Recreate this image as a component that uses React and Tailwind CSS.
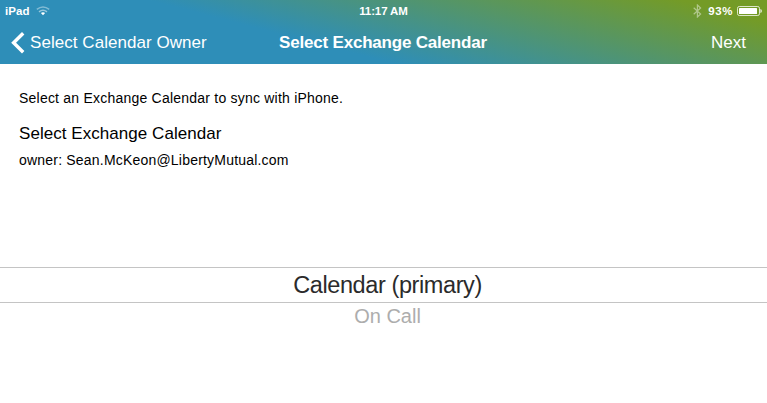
function Wifi() {
  return (
    <svg className="ml-[6px] h-[10px] w-[14px]" viewBox="0 0 14 10" fill="none">
      <path d="M.8 3.4Q7 -1.6 13.2 3.4" stroke="white" strokeOpacity=".4" strokeWidth="1.5" />
      <path d="M3 5.8Q7 2.6 11 5.8" stroke="white" strokeOpacity=".5" strokeWidth="1.5" />
      <path d="M4.9 7Q7 5.5 9.1 7L7 9.3Z" fill="white" />
    </svg>
  );
}

function Bluetooth() {
  return (
    <svg className="h-[14px] w-[9px]" viewBox="0 0 9 14" fill="none" stroke="white" strokeOpacity=".45" strokeWidth="1.2">
      <path d="M.7 3.8L7.6 10L4.4 13V1L7.6 4L.7 10.2" />
    </svg>
  );
}

function Battery() {
  return (
    <svg className="h-[11px] w-[26px]" viewBox="0 0 26 11" fill="none">
      <rect x=".5" y=".5" width="22" height="9" rx="1.8" stroke="white" strokeOpacity=".75" />
      <rect x="2" y="2" width="18" height="6" rx=".5" fill="white" />
      <path d="M23.8 3.3Q25.2 5 23.8 6.7Z" fill="white" stroke="white" strokeWidth=".5" />
    </svg>
  );
}

export default function App() {
  return (
    <div className="flex h-[403px] w-[767px] flex-col overflow-hidden bg-white font-['Liberation_Sans',Arial,sans-serif] text-black">
      <header className="h-16 bg-[linear-gradient(14.5deg,#2e8eb8_39%,#749b26_91.5%)] text-white">
        <div className="grid h-[22px] grid-cols-3 items-center text-[11.5px] leading-[22px] font-bold">
          <div className="flex items-center pl-[5px]">
            <span className="tracking-[0.1px]">iPad</span>
            <Wifi />
          </div>
          <span className="text-center tracking-[-0.1px]">11:17 AM</span>
          <div className="flex items-center justify-end pr-[4px]">
            <Bluetooth />
            <span className="ml-[6px] tracking-[0.6px]">93%</span>
            <span className="ml-1"><Battery /></span>
          </div>
        </div>
        <nav className="grid h-[42px] grid-cols-[250px_266px_251px] text-[17px] leading-[41px]">
          <div className="flex pl-[11px]">
            <svg className="mt-[10px] h-[22px] w-[14px]" viewBox="0 0 14 22" fill="none">
              <path d="M12.2 1.3L2.6 10.8L12.2 20.3" stroke="white" strokeWidth="3.4" />
            </svg>
            <span className="ml-[5px] tracking-[0.05px] whitespace-nowrap">Select Calendar Owner</span>
          </div>
          <span className="text-center font-bold tracking-[-0.2px] whitespace-nowrap">Select Exchange Calendar</span>
          <span className="pr-[21px] text-right">Next</span>
        </nav>
      </header>
      <main className="flex flex-1 flex-col">
        <section className="h-[203px] pt-[24px] pl-[19px]">
          <p className="text-[14px] leading-[20px] tracking-[0.22px]">Select an Exchange Calendar to sync with iPhone.</p>
          <h1 className="mt-[15px] text-[17px] leading-[22px] tracking-[0.05px]">Select Exchange Calendar</h1>
          <p className="mt-[5px] text-[14px] leading-[20px] tracking-[0.2px]">owner: Sean.McKeon@LibertyMutual.com</p>
        </section>
        <div className="h-9 border-y border-[#c4c4c4] pl-[8px] text-center text-[23.5px] leading-[34px] text-[#2b2b2b]">
          <span className="tracking-[-0.4px]">Calendar (primary)</span>
        </div>
        <div className="pl-[8px] text-center text-[20px] leading-[26px] text-[#adadad]">On Call</div>
      </main>
    </div>
  );
}
